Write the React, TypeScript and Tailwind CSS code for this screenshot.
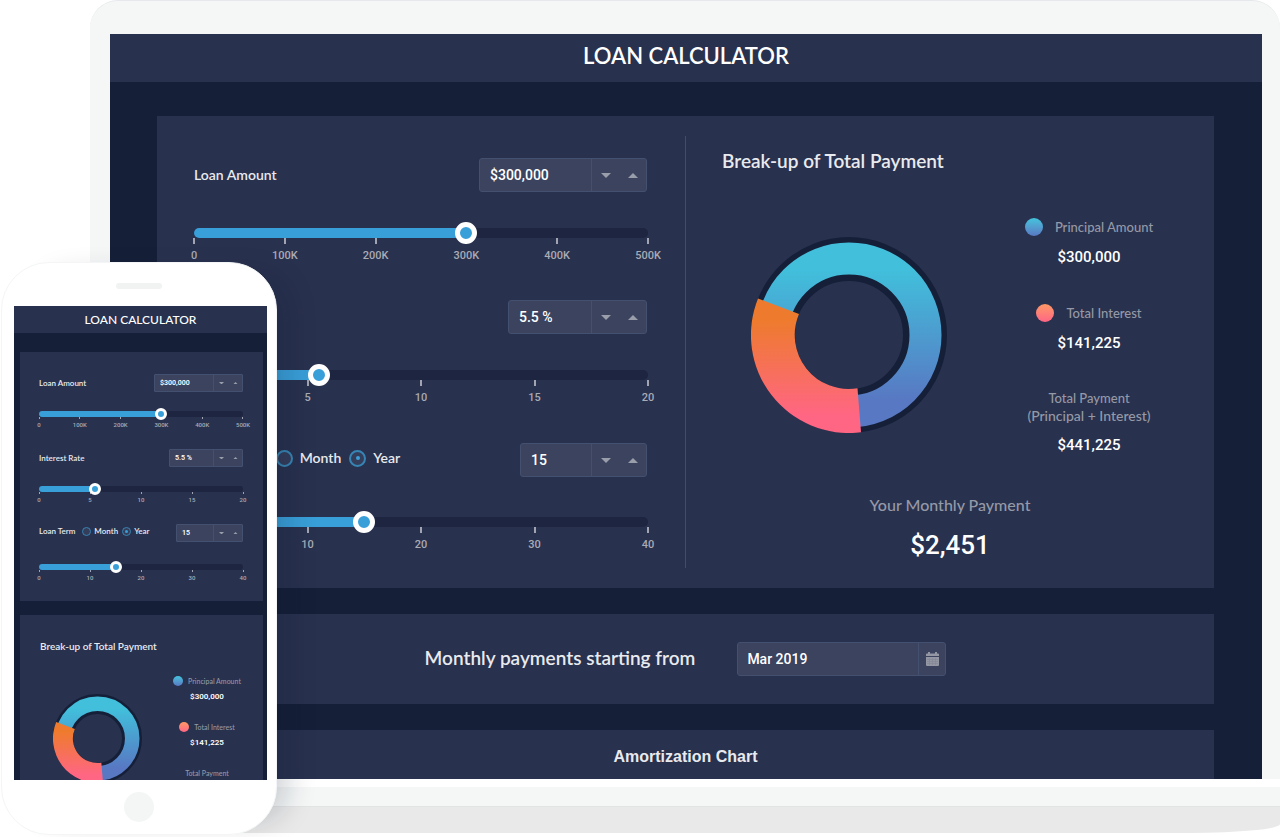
import { useId, useState } from "react";
import clsx from "clsx";

const AMOUNT_MARKS = ["0", "100K", "200K", "300K", "400K", "500K"];
const RATE_MARKS = ["0", "5", "10", "15", "20"];
const TERM_MARKS = ["0", "10", "20", "30", "40"];

interface SizeProps {
  compact?: boolean;
}

interface StepperProps extends SizeProps {
  id: string;
  value: string;
  width: string;
  onStep: (direction: number) => void;
}

function Stepper({ id, value, width, onStep, compact }: StepperProps) {
  const button = clsx("flex items-center justify-center", compact ? "w-3.5" : "w-[27px]");
  const arrow = compact ? "w-[5px]" : "w-2.5";

  return (
    <div
      className={clsx(
        "flex overflow-hidden border border-[#435070] bg-[#3b435f]",
        compact ? "h-[18px] rounded-[1px]" : "h-[34px] rounded-[3px]",
        width
      )}
    >
      <input
        id={id}
        type="text"
        value={value}
        readOnly
        className={clsx(
          "min-w-0 flex-1 border-r border-[#435070] bg-transparent font-['Roboto',sans-serif] text-white outline-none",
          compact ? "pl-[5px] text-[7px] font-semibold" : "pl-2.5 text-sm font-medium"
        )}
      />
      <button type="button" aria-label="Decrease" onClick={() => onStep(-1)} className={button}>
        <svg viewBox="0 0 10 5" className={arrow} fill="#9a9eaa"><path d="M0 0h10L5 5z" /></svg>
      </button>
      <button type="button" aria-label="Increase" onClick={() => onStep(1)} className={button}>
        <svg viewBox="0 0 10 5" className={arrow} fill="#9a9eaa"><path d="M0 5h10L5 0z" /></svg>
      </button>
    </div>
  );
}

interface SliderProps extends SizeProps {
  label: string;
  value: number;
  max: number;
  step: number;
  marks: string[];
  onChange: (value: number) => void;
}

function Slider({ label, value, max, step, marks, onChange, compact }: SliderProps) {
  return (
    <div>
      <div className={clsx("relative rounded-full bg-[#1d2541]", compact ? "h-1.5" : "h-2.5")}>
        <div className="h-full rounded-l-full bg-[#399fd8]" style={{ width: `${(value / max) * 100}%` }} />
        {/* the input is wider than the track by half a thumb on each side */}
        <input
          type="range"
          aria-label={label}
          min={0}
          max={max}
          step={step}
          value={value}
          onChange={e => onChange(Number(e.target.value))}
          className={clsx(
            "absolute top-1/2 -translate-y-1/2 cursor-pointer appearance-none bg-transparent outline-none [&::-webkit-slider-thumb]:appearance-none [&::-webkit-slider-thumb]:rounded-full [&::-webkit-slider-thumb]:border-white [&::-webkit-slider-thumb]:bg-[#399fd8]",
            compact
              ? "-left-1.5 h-3 w-[calc(100%+12px)] [&::-webkit-slider-thumb]:size-3 [&::-webkit-slider-thumb]:border-[3px]"
              : "-left-[11px] h-[22px] w-[calc(100%+22px)] [&::-webkit-slider-thumb]:size-[22px] [&::-webkit-slider-thumb]:border-5"
          )}
        />
      </div>
      <div className="flex justify-between">
        {marks.map(mark => (
          <div key={mark} className="flex w-0 flex-col items-center">
            <span className={clsx("shrink-0 bg-[#a2a5b1]", compact ? "h-[2px] w-px" : "h-1.5 w-0.5")} />
            <span
              className={clsx(
                "font-['Roboto',sans-serif] font-medium whitespace-nowrap text-[#a9abb5]",
                compact ? "mt-px text-[6px] leading-[10px]" : "mt-[3px] text-[11px] leading-[17px]"
              )}
            >
              {mark}
            </span>
          </div>
        ))}
      </div>
    </div>
  );
}

function TermUnit({ compact }: SizeProps) {
  const name = useId();
  const [unit, setUnit] = useState("Year");

  return (
    <div className={clsx("flex items-center", compact ? "ml-[7px] gap-1" : "ml-[18px] gap-2")}>
      {["Month", "Year"].map(option => (
        <label key={option} className={clsx("flex items-center", compact ? "gap-[3px]" : "gap-[7px]")}>
          <input
            type="radio"
            name={name}
            checked={unit === option}
            onChange={() => setUnit(option)}
            className={clsx(
              "grid appearance-none place-items-center rounded-full border-[#3785b5] bg-[#343d5a] checked:before:rounded-full checked:before:bg-[#399fd8]",
              compact ? "size-[9px] border checked:before:size-[3px]" : "size-[17px] border-2 checked:before:size-1"
            )}
          />
          {option}
        </label>
      ))}
    </div>
  );
}

function LoanInputs({ compact }: SizeProps) {
  const id = useId();
  const [amount, setAmount] = useState(300000);
  const [rate, setRate] = useState(5.5);
  const [term, setTerm] = useState(15);

  const clamp = (value: number, max: number) => Math.min(Math.max(value, 0), max);
  const group = clsx("flex flex-col", compact ? "gap-[19px]" : "gap-9");
  const row = clsx("flex items-center justify-between", !compact && "pr-px");

  return (
    <div
      className={clsx(
        "flex flex-col font-semibold text-[#e9eaee]",
        compact ? "gap-[19px] text-[8px] leading-[10px]" : "gap-9 text-sm leading-5"
      )}
    >
      <div className={group}>
        <div className={row}>
          <label htmlFor={`${id}-amount`}>Loan Amount</label>
          <Stepper
            id={`${id}-amount`}
            value={`$${amount.toLocaleString("en-US")}`}
            width={compact ? "w-[89px]" : "w-[168px]"}
            onStep={d => setAmount(clamp(amount + d * 10000, 500000))}
            compact={compact}
          />
        </div>
        <Slider label="Loan Amount" value={amount} max={500000} step={1000} marks={AMOUNT_MARKS} onChange={setAmount} compact={compact} />
      </div>

      <div className={group}>
        <div className={row}>
          <label htmlFor={`${id}-rate`}>Interest Rate</label>
          <Stepper
            id={`${id}-rate`}
            value={`${rate} %`}
            width={compact ? "w-[74px]" : "w-[139px]"}
            onStep={d => setRate(clamp(rate + d * 0.5, 20))}
            compact={compact}
          />
        </div>
        <Slider label="Interest Rate" value={rate} max={20} step={0.5} marks={RATE_MARKS} onChange={setRate} compact={compact} />
      </div>

      <div className={group}>
        <div className={clsx(row, compact ? "pb-[3px]" : "pt-px pb-1")}>
          <div className="flex items-center pb-1">
            <label htmlFor={`${id}-term`}>Loan Term</label>
            <TermUnit compact={compact} />
          </div>
          <Stepper
            id={`${id}-term`}
            value={`${term}`}
            width={compact ? "w-[67px]" : "w-[127px]"}
            onStep={d => setTerm(clamp(term + d, 40))}
            compact={compact}
          />
        </div>
        <Slider label="Loan Term" value={term} max={40} step={1} marks={TERM_MARKS} onChange={setTerm} compact={compact} />
      </div>
    </div>
  );
}

function Donut({ className }: { className: string }) {
  const id = useId();

  return (
    <svg viewBox="-98 -98 196 196" className={clsx("shrink-0", className)} role="img" aria-label="Principal and interest shares">
      <defs>
        <linearGradient id={`${id}-principal`} gradientUnits="userSpaceOnUse" x1="0" y1="-65" x2="0" y2="65">
          <stop offset="0" stopColor="#41bfdb" />
          <stop offset="1" stopColor="#5878c3" />
        </linearGradient>
        <linearGradient id={`${id}-interest`} gradientUnits="userSpaceOnUse" x1="0" y1="-15" x2="0" y2="80">
          <stop offset="0" stopColor="#ee7b2d" />
          <stop offset="1" stopColor="#ff6683" />
        </linearGradient>
      </defs>
      <circle r="76" fill="none" stroke="#151f38" strokeWidth="44" />
      <circle r="76.5" fill="none" stroke={`url(#${id}-principal)`} strokeWidth="32" />
      <path d="M-91 -36.5A98 98 0 0 0 12 97.3L8.5 53.3A54 54 0 0 1 -50 -21Z" fill={`url(#${id}-interest)`} />
    </svg>
  );
}

function Legend({ compact }: SizeProps) {
  const group = clsx("flex flex-col items-center", compact ? "gap-1.5" : "gap-2.5");
  const name = clsx("flex items-center whitespace-nowrap", compact ? "gap-[5px]" : "gap-3");
  const dot = clsx("rounded-full bg-linear-to-b", compact ? "size-2.5" : "size-[18px]");
  const value = clsx(
    "font-['Roboto',sans-serif] text-white",
    compact ? "text-[8px] font-semibold" : "text-[15px] leading-5 font-medium"
  );

  return (
    <div
      className={clsx(
        "flex flex-col items-center font-medium text-[#9599a7]",
        compact ? "w-[70px] gap-5 text-[7px] leading-[10px]" : "w-[132px] gap-9 text-[13px] leading-5"
      )}
    >
      <div className={group}>
        <div className={name}>
          <span className={clsx(dot, "from-[#41c4dc] to-[#5878c3]")} />
          Principal Amount
        </div>
        <div className={value}>$300,000</div>
      </div>
      <div className={group}>
        <div className={name}>
          <span className={clsx(dot, "from-[#fd9865] to-[#ff6584]")} />
          Total Interest
        </div>
        <div className={value}>$141,225</div>
      </div>
      {compact ? (
        <div>Total Payment</div>
      ) : (
        <div className={group}>
          <div className="text-center leading-[18px] whitespace-nowrap">
            <p>Total Payment</p>
            <p className="text-sm leading-[18px]">(Principal + Interest)</p>
          </div>
          <div className={value}>$441,225</div>
        </div>
      )}
    </div>
  );
}

function LaptopScreen() {
  return (
    <div className="overflow-hidden bg-[#151f38] text-[#e9eaee]">
      <header className="bg-[#28314e] pt-1.5 pb-2.5 text-center">
        <h1 className="text-[22px] leading-8 font-semibold text-white">LOAN CALCULATOR</h1>
      </header>

      <main className="mr-12 ml-[47px] mt-[34px] flex flex-col gap-[26px]">
        <section className="grid grid-cols-[minmax(0,1fr)_1px_minmax(0,1fr)] bg-[#28314e]">
          <div className="px-[37px] pt-[42px] pb-[35px]">
            <LoanInputs />
          </div>
          <div className="my-5 bg-[#434c69]" />
          <div className="pt-[33px]">
            <h2 className="pl-9 text-[19px] leading-6 font-semibold">Break-up of Total Payment</h2>
            <div className="mt-11 flex items-start justify-between pr-[59px] pl-[65px]">
              <Donut className="mt-5 size-[196px]" />
              <Legend />
            </div>
            <div className="mt-10 text-center">
              <p className="text-base leading-5 font-medium text-[#9599a7]">Your Monthly Payment</p>
              <p className="mt-3 font-['Roboto',sans-serif] text-[26px] leading-9 font-medium text-white">$2,451</p>
            </div>
          </div>
        </section>

        <section className="flex items-center justify-center gap-[42px] bg-[#28314e] py-7">
          <label htmlFor="start-month" className="pb-0.5 text-[19px] leading-6 font-semibold">Monthly payments starting from</label>
          <div className="flex h-[34px] w-[209px] overflow-hidden rounded-[3px] border border-[#435070] bg-[#3b435f]">
            <input
              id="start-month"
              type="text"
              defaultValue="Mar 2019"
              className="min-w-0 flex-1 border-r border-[#435070] bg-transparent pl-[9px] font-['Roboto',sans-serif] text-sm font-medium text-white outline-none"
            />
            <button type="button" aria-label="Choose month" className="flex w-[26px] items-center justify-center">
              <svg viewBox="0 0 13 14" className="w-[13px]" fill="#9497a3">
                <path d="M0 2.5Q0 1.5 1 1.5H2V0h2v1.5h5V0h2v1.5h1q1 0 1 1V4H0zM0 5h13v8q0 1-1 1H1q-1 0-1-1z" />
                <path d="M1 7.5h11M1 9.5h11M1 11.5h11M3.5 6v7M6.5 6v7M9.5 6v7" stroke="#7e8292" strokeWidth=".5" />
              </svg>
            </button>
          </div>
        </section>

        <section className="bg-[#28314e] pt-[15px] pb-2.5 text-center">
          <h2 className="font-['Liberation_Sans',sans-serif] text-base leading-6 font-bold">Amortization Chart</h2>
        </section>
      </main>
    </div>
  );
}

function Phone() {
  return (
    <div className="absolute top-[262px] left-px w-[276px] rounded-[48px] border border-[#f4f5f6] bg-white px-[9px] pt-5 pb-3 shadow-[24px_0_30px_-14px_rgba(10,18,40,0.2)]">
      <div className="mx-auto h-1.5 w-[46px] rounded-full bg-[#f1f3f3]" />
      <div className="mt-[17px] ml-[3px] h-[474px] overflow-hidden bg-[#151f38] text-[#e9eaee]">
        <header className="bg-[#28314e] pt-1.5 pb-[5px] text-center">
          <h1 className="text-xs leading-4 font-medium text-white">LOAN CALCULATOR</h1>
        </header>
        <div className="mr-1 ml-1.5 mt-[19px] flex flex-col gap-3.5">
          <section className="bg-[#28314e] pt-[22px] pr-5 pb-[18px] pl-[19px]">
            <LoanInputs compact />
          </section>
          <section className="bg-[#28314e] pt-6">
            <h2 className="pl-5 text-[10px] leading-[14px] font-semibold">Break-up of Total Payment</h2>
            <div className="mt-[23px] flex items-start justify-between pr-[21px] pl-[33px]">
              <Donut className="mt-[18px] size-[89px]" />
              <Legend compact />
            </div>
          </section>
        </div>
      </div>
      <div className="mx-auto mt-3 size-[30px] rounded-full bg-[#f4f6f6]" />
    </div>
  );
}

export default function App() {
  return (
    <div className="relative overflow-hidden bg-white pb-1 font-['Lato',sans-serif]">
      <div className="ml-[90px] rounded-t-[28px] border-t border-[#e6e9eb] bg-[#f5f7f7] pt-[33px] pr-[18px] pl-5">
        <LaptopScreen />
      </div>
      <div className="ml-[110px] h-2 bg-white" />
      <div className="ml-[60px] h-[19px] bg-[#f5f7f7]" />
      <div className="ml-[60px] h-[27px] rounded-br-[90px_9px] border-t border-[#e2e4e4] bg-[#e9e9e9]" />
      <Phone />
    </div>
  );
}
